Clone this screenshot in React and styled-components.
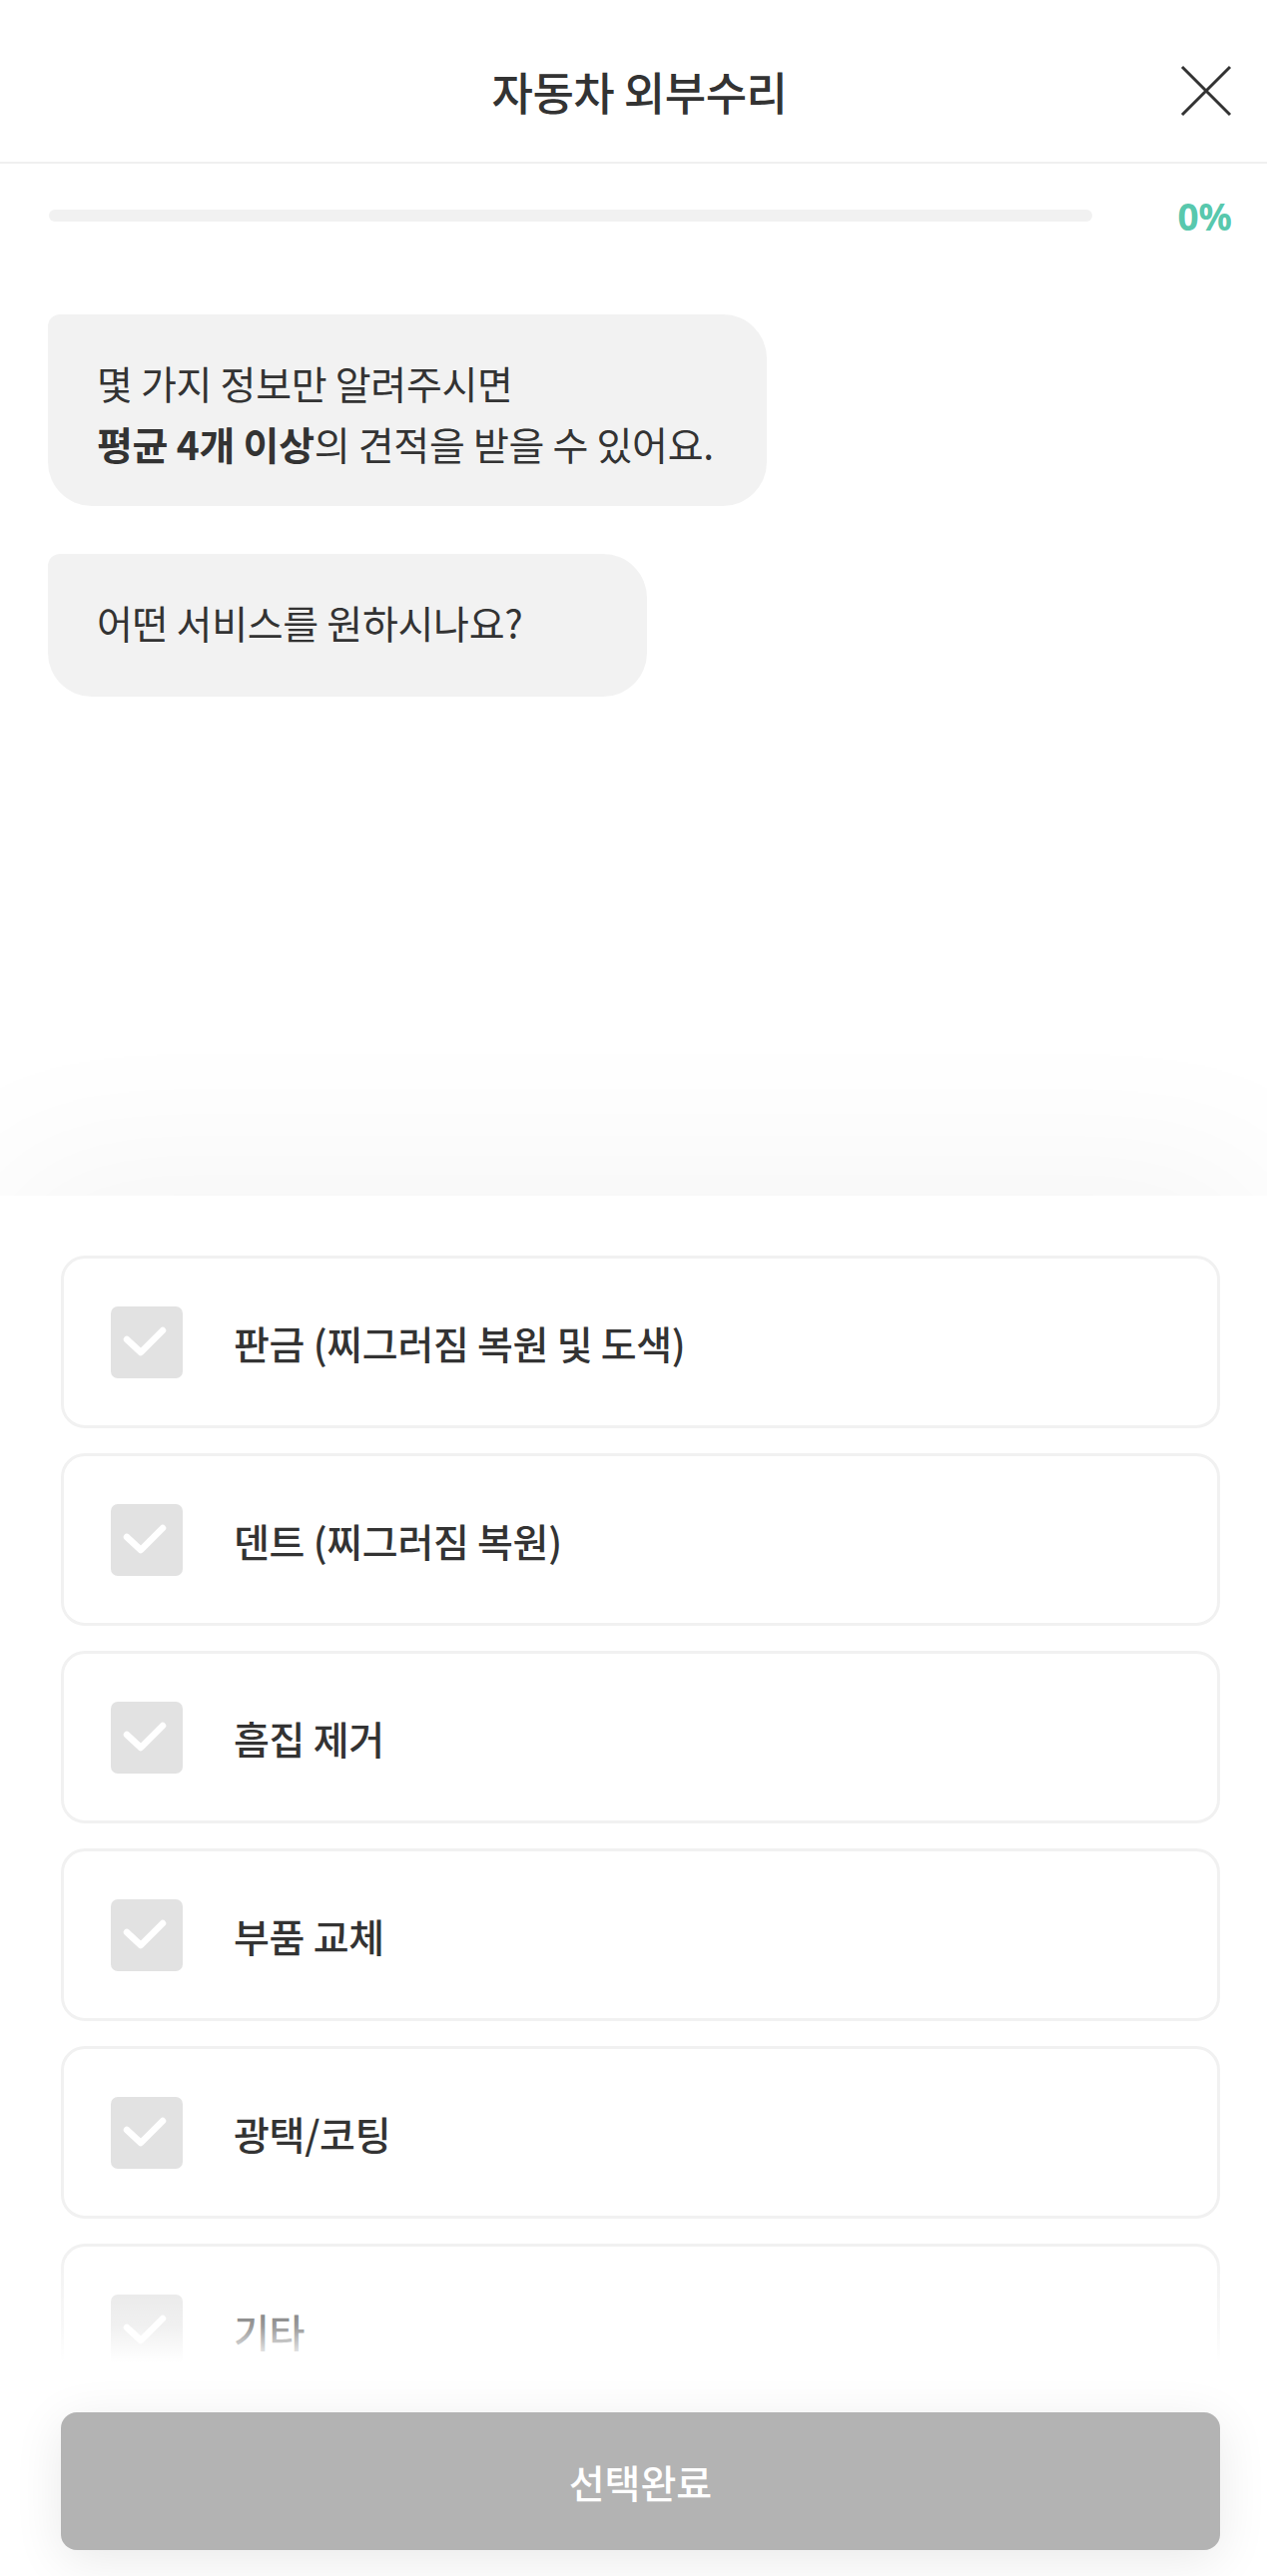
import React from "react";
import styled, { createGlobalStyle } from "styled-components";

const GlobalStyle = createGlobalStyle`
  * { box-sizing: border-box; }
  html, body { margin: 0; padding: 0; background: #fff; }
  body {
    font-family: "Noto Sans CJK KR", "Noto Sans", sans-serif;
    color: #333;
  }
`;

const options = [
  "판금 (찌그러짐 복원 및 도색)",
  "덴트 (찌그러짐 복원)",
  "흠집 제거",
  "부품 교체",
  "광택/코팅",
  "기타",
];

const App = () => {
  return (
    <>
      <GlobalStyle />
      <Page>
        <Header>
          <Title>자동차 외부수리</Title>
          <CloseButton aria-label="닫기">
            <svg width="52" height="52" viewBox="0 0 52 52">
              <path
                d="M2 2 L50 50 M50 2 L2 50"
                stroke="#333"
                strokeWidth="3"
                fill="none"
              />
            </svg>
          </CloseButton>
        </Header>

        <ProgressRow>
          <Track>
            <Fill style={{ width: "0%" }} />
          </Track>
          <Percent>0%</Percent>
        </ProgressRow>

        <Chat>
          <Bubble $w={720}>
            몇 가지 정보만 알려주시면
            <br />
            <strong>평균 4개 이상</strong>의 견적을 받을 수 있어요.
          </Bubble>
          <Bubble $w={600} $minH={143}>
            어떤 서비스를 원하시나요?
          </Bubble>
        </Chat>

        <Sheet>
          <ListArea>
            <OptionList>
              {options.map((label) => (
                <OptionCard key={label}>
                  <CheckBox>
                    <svg width="72" height="72" viewBox="0 0 72 72">
                      <polyline
                        points="16,33 30,46 52,24"
                        stroke="#fff"
                        strokeWidth="6.5"
                        strokeLinecap="round"
                        strokeLinejoin="round"
                        fill="none"
                      />
                    </svg>
                  </CheckBox>
                  <OptionLabel>{label}</OptionLabel>
                </OptionCard>
              ))}
            </OptionList>
            <Fade />
          </ListArea>
          <Footer>
            <SubmitButton disabled>선택완료</SubmitButton>
          </Footer>
        </Sheet>
      </Page>
    </>
  );
};

export default App;

const Page = styled.div`
  height: 100vh;
  display: flex;
  flex-direction: column;
  overflow: hidden;
`;

const Header = styled.header`
  height: 164px;
  flex-shrink: 0;
  padding-top: 20px;
  display: flex;
  align-items: center;
  justify-content: center;
  position: relative;
  border-bottom: 2px solid #f0f0f0;
`;

const Title = styled.h1`
  margin: 0;
  font-size: 45px;
  font-weight: 500;
  letter-spacing: -0.5px;
  color: #333;
  padding-left: 12px;
`;

const CloseButton = styled.button`
  position: absolute;
  right: 35px;
  top: 65px;
  width: 52px;
  height: 52px;
  padding: 0;
  border: 0;
  background: none;
  display: flex;
`;

const ProgressRow = styled.div`
  flex-shrink: 0;
  display: flex;
  align-items: center;
  gap: 84px;
  padding: 32px 35px 0 49px;
  height: 72px;
`;

const Track = styled.div`
  flex: 1;
  height: 12px;
  border-radius: 6px;
  background: #f1f1f1;
  overflow: hidden;
`;

const Fill = styled.div`
  height: 100%;
  background: #52c6ab;
`;

const Percent = styled.span`
  font-family: "Noto Sans", "Noto Sans CJK KR", sans-serif;
  font-size: 37px;
  font-weight: 700;
  color: #58c8ad;
  width: 56px;
  text-align: right;
`;

const Chat = styled.div`
  flex: 1;
  display: flex;
  flex-direction: column;
  align-items: flex-start;
  gap: 48px;
  padding: 79px 0 0 48px;
`;

const Bubble = styled.div`
  width: ${(p) => p.$w}px;
  min-height: ${(p) => (p.$minH ? `${p.$minH}px` : "auto")};
  padding: 38px 0 32px 49px;
  background: #f2f2f2;
  border-radius: 12px 44px 44px 44px;
  font-size: 39px;
  line-height: 61px;
  letter-spacing: -0.3px;
  white-space: nowrap;
  color: #333;

  strong {
    font-weight: 700;
  }
`;

const Sheet = styled.section`
  height: 1383px;
  flex-shrink: 0;
  display: flex;
  flex-direction: column;
  background: #fff;
  box-shadow: 0 -30px 160px rgba(0, 0, 0, 0.045);
  position: relative;
`;

const ListArea = styled.div`
  flex: 1;
  position: relative;
  overflow: hidden;
  padding: 60px 47px 0 61px;
`;

const OptionList = styled.div`
  display: flex;
  flex-direction: column;
  gap: 25px;
`;

const OptionCard = styled.div`
  height: 173px;
  flex-shrink: 0;
  display: flex;
  align-items: center;
  gap: 51px;
  padding-left: 47px;
  border: 3px solid #f1f1f1;
  border-radius: 24px;
  background: #fff;
`;

const CheckBox = styled.span`
  width: 72px;
  height: 72px;
  border-radius: 7px;
  background: #e2e2e2;
  display: flex;
  flex-shrink: 0;
`;

const OptionLabel = styled.span`
  font-size: 39px;
  font-weight: 500;
  letter-spacing: -0.3px;
  color: #333;
`;

const Fade = styled.div`
  position: absolute;
  left: 0;
  right: 0;
  bottom: 0;
  height: 120px;
  background: linear-gradient(
    to bottom,
    rgba(255, 255, 255, 0) 0%,
    rgba(255, 255, 255, 0.5) 70%,
    #fff 100%
  );
  pointer-events: none;
`;

const Footer = styled.div`
  flex-shrink: 0;
  padding: 50px 47px 26px 61px;
`;

const SubmitButton = styled.button`
  width: 100%;
  height: 138px;
  border: 0;
  border-radius: 16px;
  background: #b3b3b3;
  color: #fff;
  font-family: "Noto Sans CJK KR", "Noto Sans", sans-serif;
  font-size: 39px;
  font-weight: 500;
  box-shadow: 0 10px 50px rgba(0, 0, 0, 0.09);
`;
